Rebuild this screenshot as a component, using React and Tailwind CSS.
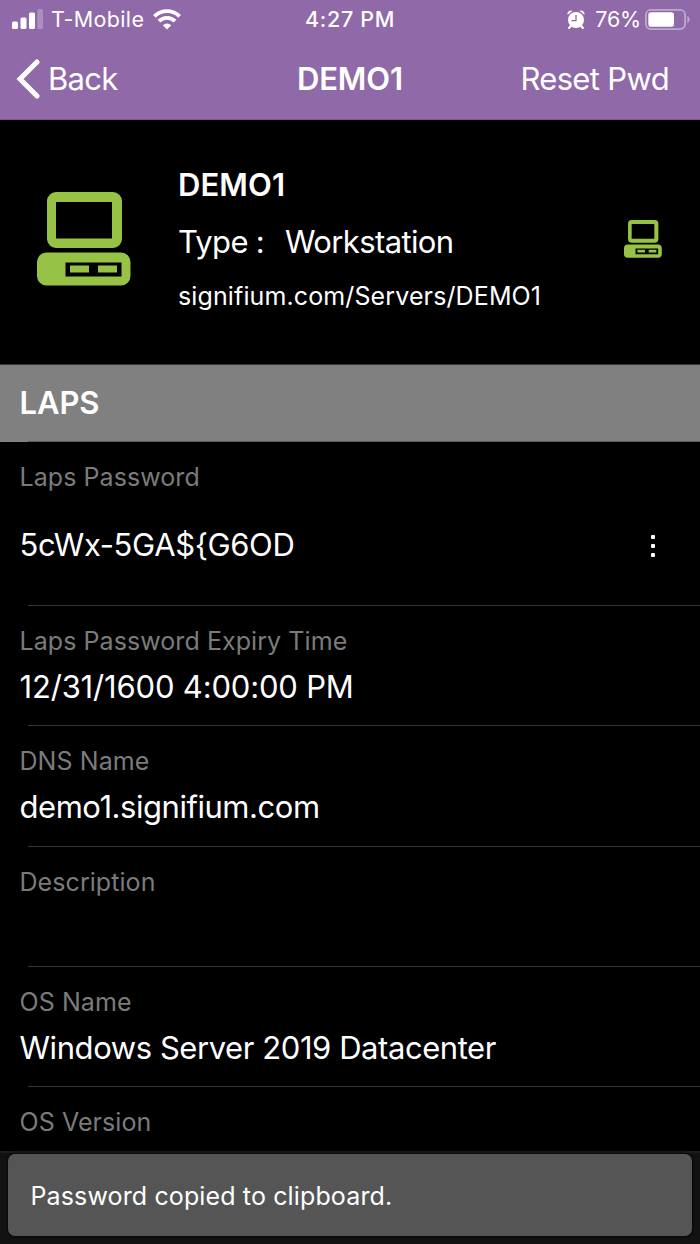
const font = "font-['Inter','Noto_Sans',sans-serif]";

function ComputerIcon({ className }) {
  return (
    <svg viewBox="0 0 94 94" className={className} fill="#96c245" aria-hidden="true">
      <path fillRule="evenodd" d="M19 0h57a9 9 0 0 1 9 9v38a9 9 0 0 1-9 9H19a9 9 0 0 1-9-9V9a9 9 0 0 1 9-9zM19 10v36.500h56V10z" />
      <path fillRule="evenodd" d="M9.500 60.500h74.500a9.500 9.500 0 0 1 9.500 9.500v14a9.500 9.500 0 0 1-9.500 9.500H9.500A9.500 9.500 0 0 1 0 84V70a9.500 9.500 0 0 1 9.500-9.500zM28.500 70.500v14h56v-14z" />
      <path d="M33 73.500h19v7H33zM61 73.500h19v7H61z" />
    </svg>
  );
}

function SignalIcon() {
  return (
    <svg viewBox="0 0 31 20" className="h-5 w-[31px]" fill="#fff" aria-hidden="true">
      <rect x="0" y="12.500" width="6" height="7.500" rx="1.500" />
      <rect x="8.500" y="8.500" width="6" height="11.500" rx="1.500" />
      <rect x="17" y="3.500" width="6" height="16.500" rx="1.500" />
      <rect x="25.300" y="0" width="5.700" height="20" rx="1.500" opacity="0.26" />
    </svg>
  );
}

function WifiIcon() {
  return (
    <svg viewBox="0 0 28 21" className="h-[21px] w-7" fill="none" stroke="#fff" strokeWidth="3.900" aria-hidden="true">
      <path d="M1.400 7.400a17.800 17.800 0 0 1 25.200 0" />
      <path d="M6 12.200a11.300 11.300 0 0 1 16 0" />
      <path d="M14 20.500l-4.200-4.300a6 6 0 0 1 8.400 0z" fill="#fff" stroke="none" />
    </svg>
  );
}

function AlarmIcon() {
  return (
    <svg viewBox="0 0 18 19" className="h-[19px] w-[18px]" aria-hidden="true">
      <circle cx="9" cy="10" r="8" fill="#fff" />
      <path d="M0.600 4.800C-0.200 2 2.500-0.300 5.400 0.900zM17.400 4.800C18.200 2 15.500-0.300 12.600 0.900z" fill="#fff" />
      <path d="M3.800 16l-1.700 2M14.200 16l1.700 2" stroke="#fff" strokeWidth="2" strokeLinecap="round" />
      <path d="M9 5v5.600H4.500" stroke="#8f69a8" strokeWidth="1.300" fill="none" />
    </svg>
  );
}

function BatteryIcon() {
  return (
    <svg viewBox="0 0 45 21" className="h-[21px] w-[45px]" aria-hidden="true">
      <rect x="0.900" y="0.900" width="39.200" height="19.200" rx="5" fill="none" stroke="#fff" strokeOpacity="0.42" strokeWidth="1.800" />
      <rect x="3.300" y="3.300" width="25.700" height="14.400" rx="2.800" fill="#fff" />
      <path d="M42.300 7v7c3-1.300 3-5.700 0-7z" fill="#fff" fillOpacity="0.42" />
    </svg>
  );
}

function Label({ children }) {
  return <div className="h-9 pl-[19.500px] text-[25px] leading-9 tracking-[0.070px] text-[#7b7b7b]">{children}</div>;
}

function Field({ label, value, spacing = "" }) {
  return (
    <section className="flex h-[120.250px] shrink-0 flex-col pt-[17px]">
      <Label>{label}</Label>
      <div className={`mt-2.5 h-9 pl-[19.500px] text-[31px] leading-9 ${spacing}`}>{value}</div>
      <div className="mt-auto ml-7 h-px bg-[#363636]" />
    </section>
  );
}

export default function App() {
  return (
    <div className={`flex h-[1244px] w-[700px] flex-col overflow-hidden bg-black whitespace-pre text-white ${font}`}>
      <header className="h-[120px] shrink-0 border-b border-[#7c5a92] bg-[#8f69a8]">
        <div className="grid h-[38px] grid-cols-3 items-center text-[21.500px] leading-6">
          <div className="flex items-center pl-3">
            <SignalIcon />
            <span className="ml-2 tracking-[0.330px]">T-Mobile</span>
            <span className="ml-[9px]"><WifiIcon /></span>
          </div>
          <div className="text-center font-medium tracking-[0.650px]">4:27 PM</div>
          <div className="flex items-center justify-end pr-[10px]">
            <AlarmIcon />
            <span className="mr-1 ml-2.5 tracking-[-0.200px]">76%</span>
            <BatteryIcon />
          </div>
        </div>
        <div className="mt-px grid h-20 grid-cols-3 items-center text-[31px] leading-10">
          <div className="flex items-center pl-4">
            <svg viewBox="0 0 24 40" className="h-10 w-6" fill="none" stroke="#fff" strokeWidth="5" strokeLinecap="round" strokeLinejoin="miter" aria-hidden="true">
              <path d="M21 3L4 20L21 37" />
            </svg>
            <span className="ml-2 tracking-[-0.700px]">Back</span>
          </div>
          <div className="text-center font-semibold tracking-[-0.100px]">DEMO1</div>
          <div className="pr-[31px] text-right tracking-[-0.650px]">Reset Pwd</div>
        </div>
      </header>

      <main className="flex min-h-0 flex-1 flex-col">
        <section className="flex h-[244px] shrink-0 pl-[37px]">
          <ComputerIcon className="mt-[72px] h-[94px] w-[94px]" />
          <div className="ml-[47px] flex flex-1 flex-col pt-[45px]">
            <div className="h-10 text-[31px] leading-10 font-semibold tracking-[0.100px]">DEMO1</div>
            <div className="mt-[17px] flex h-10 text-[31px] leading-10">
              <span className="w-[107px] tracking-[-0.700px]">Type :</span>
              <span className="tracking-[-0.620px]">Workstation</span>
            </div>
            <div className="mt-[14px] h-10 text-[25px] leading-10 tracking-[0.120px]">signifium.com/Servers/DEMO1</div>
          </div>
          <ComputerIcon className="mt-[100px] mr-[38px] h-[38px] w-[38px]" />
        </section>

        <div className="flex h-[78px] shrink-0 flex-col border-t border-[#363636] bg-[#808080]">
          <h2 className="flex flex-1 items-center pt-px pl-[19.500px] text-[31px] font-semibold tracking-[-0.100px]">LAPS</h2>
          <div className="ml-7 h-px bg-[#5a5a5a]" />
        </div>

        <section className="flex h-[164px] shrink-0 flex-col pt-[17px]">
          <Label>Laps Password</Label>
          <div className="mt-8 flex h-9 items-center justify-between pr-[45px] pl-[19.500px] text-[31px] leading-9">
            <span className="tracking-[-0.380px]">{"5cWx-5GA${G6OD"}</span>
            <span className="flex flex-col gap-[5px] pt-px">
              <i className="size-1 rounded-[1px] bg-white" />
              <i className="size-1 rounded-[1px] bg-white" />
              <i className="size-1 rounded-[1px] bg-white" />
            </span>
          </div>
          <div className="mt-auto ml-7 h-px bg-[#363636]" />
        </section>

        <Field label="Laps Password Expiry Time" value="12/31/1600 4:00:00 PM" spacing="tracking-[-0.180px]" />
        <Field label="DNS Name" value="demo1.signifium.com" spacing="tracking-[-0.460px]" />
        <Field label="Description" value="" />
        <Field label="OS Name" value="Windows Server 2019 Datacenter" spacing="tracking-[-0.430px]" />
        <div className="h-16 pt-[17px]">
          <Label>OS Version</Label>
        </div>
      </main>

      <footer className="h-[93px] shrink-0 border-t-2 border-[#1c1c1c] bg-[#121212] px-2 pt-px">
        <div className="flex h-[82px] items-center rounded-[7px] bg-[#555555] pt-px pl-[22.500px] text-[25px] leading-9 tracking-[0.130px] shadow-[0_0_2px_1px_#080808]">
          Password copied to clipboard.
        </div>
      </footer>
    </div>
  );
}
